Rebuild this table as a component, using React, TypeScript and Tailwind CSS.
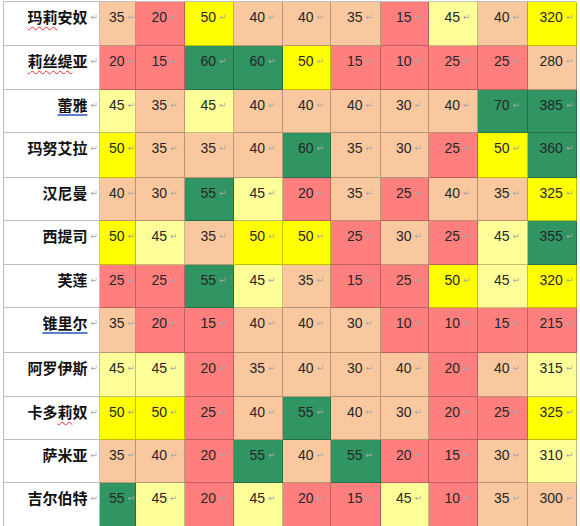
import React from "react"

type Seg = { t: string; u?: "red" | "blue" }
type Row = { name: Seg[]; h: string; cells: [string, string][] }

const colors: Record<string, string> = {
  p: "bg-[#f9c89f]",
  r: "bg-[#ff7f7f]",
  y: "bg-[#ffff00]",
  l: "bg-[#ffff99]",
  g: "bg-[#319463]",
}

const widths = [
  "w-[36px]",
  "w-[49px]",
  "w-[49px]",
  "w-[49px]",
  "w-[48px]",
  "w-[50px]",
  "w-[48px]",
  "w-[49px]",
  "w-[50px]",
  "w-[49px]",
]

const parse = (s: string): [string, string][] =>
  s.split(" ").map((c) => [c.slice(0, -1), c.slice(-1)] as [string, string])

const rows: Row[] = [
  { name: [{ t: "玛莉", u: "red" }, { t: "安奴" }], h: "h-[44px]", cells: parse("35p 20r 50y 40p 40p 35p 15r 45l 40p 320y") },
  { name: [{ t: "莉丝缇", u: "red" }, { t: "亚" }], h: "h-[44px]", cells: parse("20r 15r 60g 60g 50y 15r 10r 25r 25r 280p") },
  { name: [{ t: "蕾雅", u: "blue" }], h: "h-[43px]", cells: parse("45l 35p 45l 40p 40p 40p 30p 40p 70g 385g") },
  { name: [{ t: "玛努艾拉" }], h: "h-[45px]", cells: parse("50y 35p 35p 40p 60g 35p 30p 25r 50y 360g") },
  { name: [{ t: "汉尼曼" }], h: "h-[43px]", cells: parse("40p 30p 55g 45l 20r 35p 25r 40p 35p 325y") },
  { name: [{ t: "西提司" }], h: "h-[44px]", cells: parse("50y 45l 35p 50y 50y 25r 30p 25r 45l 355g") },
  { name: [{ t: "芙莲" }], h: "h-[43px]", cells: parse("25r 25r 55g 45l 35p 15r 25r 50y 45l 320y") },
  { name: [{ t: "锥里尔", u: "blue" }], h: "h-[45px]", cells: parse("35p 20r 15r 40p 40p 30p 10r 10r 15r 215r") },
  { name: [{ t: "阿罗伊斯" }], h: "h-[44px]", cells: parse("45l 45l 20r 35p 40p 30p 40p 20r 40p 315l") },
  { name: [{ t: "卡多" }, { t: "莉", u: "red" }, { t: "奴" }], h: "h-[43px]", cells: parse("50y 50y 25r 40p 55g 40p 30p 20r 25r 325y") },
  { name: [{ t: "萨米亚" }], h: "h-[43px]", cells: parse("35p 40p 20r 55g 40p 55g 20r 15r 30p 310l") },
  { name: [{ t: "吉尔伯特" }], h: "h-[44px]", cells: parse("55g 45l 20r 45l 20r 15r 45l 10r 35p 300p") },
]

function Mark({ hang }: { hang?: boolean }) {
  return (
    <span
      className={`text-[9px] leading-[20px] text-[#a8a8a8] font-['DejaVu_Sans',sans-serif] ml-[3px] ${
        hang ? "-mr-[9px]" : ""
      }`}
    >
      ↵
    </span>
  )
}

export default function App() {
  return (
    <div className="min-h-screen bg-white pl-[3px] pt-[1px]">
      <div className="w-[573px] border-l border-t border-black/25">
        {rows.map((row, i) => (
          <div key={i} className={`flex ${row.h}`}>
            <div className="flex w-[96px] shrink-0 items-start justify-end border-r border-b border-black/25 pr-[1px] pt-[5px]">
              <span className="text-[15px] leading-[20px] font-bold text-[#111] font-['Noto_Sans_CJK_SC',sans-serif]">
                {row.name.map((s, j) => (
                  <span
                    key={j}
                    className={
                      s.u === "red"
                        ? "underline decoration-wavy decoration-[#e03030] decoration-1 underline-offset-[3px]"
                        : s.u === "blue"
                        ? "underline decoration-[#5b7fcf] decoration-[1.5px] underline-offset-[3px]"
                        : ""
                    }
                  >
                    {s.t}
                  </span>
                ))}
              </span>
              <Mark />
            </div>
            {row.cells.map(([v, c], j) => (
              <div
                key={j}
                className={`flex shrink-0 items-start justify-center border-r border-b border-black/25 pt-[5px] ${widths[j]} ${colors[c]}`}
              >
                <span className="text-[14px] leading-[20px] text-[#262626] font-['Liberation_Sans',sans-serif]">
                  {v}
                </span>
                <Mark hang />
              </div>
            ))}
          </div>
        ))}
      </div>
    </div>
  )
}
